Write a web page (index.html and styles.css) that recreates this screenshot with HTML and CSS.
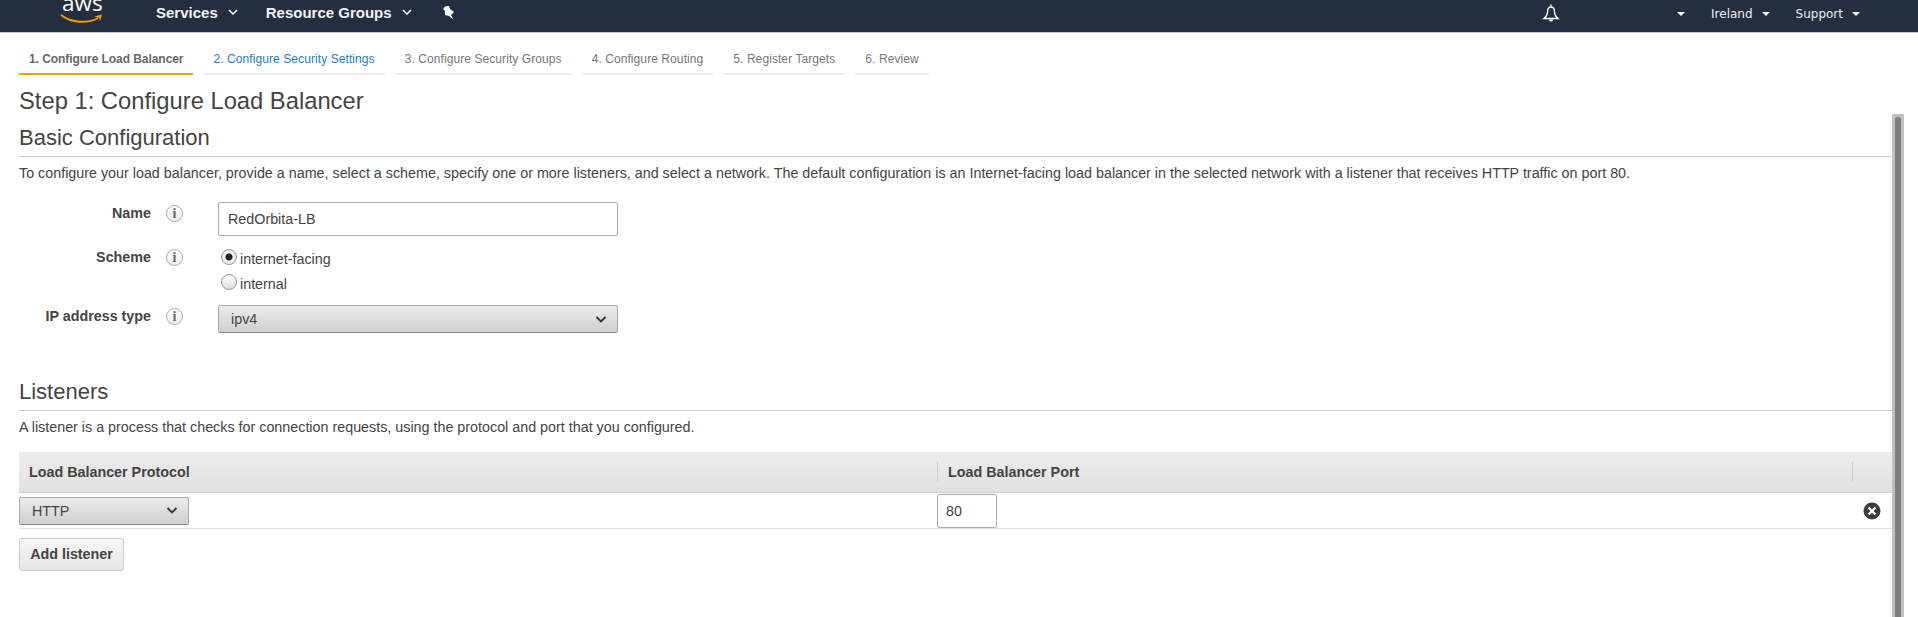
FILE: index.html
```html
<!DOCTYPE html>
<html>
    <head>
        <meta charset="utf-8">
        <title>Configure Load Balancer</title>
        <link rel="stylesheet" href="styles.css">
    </head>
    <body>
        <div class="navbar">
            <div class="logo">
                <span class="logoText">aws</span>
                <svg class="smile" width="43" height="11" viewBox="0 0 43 11">
                    <path d="M1 1 C11 9 28 10 38 4" fill="none" stroke="#f90" stroke-width="2"/>
                    <path d="M34 2.500 L42 0.500 L40 7 L39 3.500 Z" fill="#f90"/>
                </svg>
            </div>
            <div class="navItem services">Services<svg class="chevron" width="10" height="6" viewBox="0 0 10 6"><path d="M1 1 L5 5 L9 1" fill="none" stroke="#fff" stroke-width="1.6"/></svg></div>
            <div class="navItem groups">Resource Groups<svg class="chevron" width="10" height="6" viewBox="0 0 10 6"><path d="M1 1 L5 5 L9 1" fill="none" stroke="#fff" stroke-width="1.6"/></svg></div>
            <svg class="pin" width="14" height="14" viewBox="0 0 14 14">
                <path d="M4 0.500 L8 0 L9 3 L13 6 L10 9 L12.500 13.500 L8 10 L4 9 L4 5 L2 3 Z" fill="#fff"/>
            </svg>
            <div class="navRight">
                <svg class="bell" width="18" height="18" viewBox="0 0 18 18">
                    <path d="M9 0.500 V3 M9 3 C6 3 5.500 5 5.500 8 C5.500 11 4.500 12.500 2 14.500 L16 14.500 C13.500 12.500 12.500 11 12.500 8 C12.500 5 12 3 9 3 Z" fill="none" stroke="#fff" stroke-width="1.300"/>
                    <path d="M6.500 15.500 L11.500 15.500 L10 17.500 L8 17.500 Z" fill="#fff"/>
                </svg>
                <div class="smallItem account"><span class="caret"></span></div>
                <div class="smallItem region">Ireland<span class="caret"></span></div>
                <div class="smallItem support">Support<span class="caret"></span></div>
            </div>
        </div>

        <div class="tabs">
            <div class="tab active">1. Configure Load Balancer</div>
            <div class="tab next">2. Configure Security Settings</div>
            <div class="tab">3. Configure Security Groups</div>
            <div class="tab">4. Configure Routing</div>
            <div class="tab">5. Register Targets</div>
            <div class="tab">6. Review</div>
        </div>

        <h1 class="title">Step 1: Configure Load Balancer</h1>

        <div class="body">
            <div class="content">
                <h2 class="section">Basic Configuration</h2>
                <p class="description">To configure your load balancer, provide a name, select a scheme, specify one or more listeners, and select a network. The default configuration is an Internet-facing load balancer in the selected network with a listener that receives HTTP traffic on port 80.</p>

                <div class="formField nameField">
                    <span class="label">Name</span>
                    <span class="info">i</span>
                    <div class="textInput">RedOrbita-LB</div>
                </div>
                <div class="formField schemeField">
                    <span class="label">Scheme</span>
                    <span class="info">i</span>
                    <div class="radios">
                        <div class="radioRow"><span class="radio checked"></span><span class="radioText">internet-facing</span></div>
                        <div class="radioRow"><span class="radio"></span><span class="radioText">internal</span></div>
                    </div>
                </div>
                <div class="formField ipField">
                    <span class="label">IP address type</span>
                    <span class="info">i</span>
                    <div class="select wide">ipv4<svg class="selectArrow" width="12" height="7" viewBox="0 0 12 7"><path d="M1.500 1 L6 5.500 L10.500 1" fill="none" stroke="#333" stroke-width="1.800"/></svg></div>
                </div>

                <h2 class="section listeners">Listeners</h2>
                <p class="description">A listener is a process that checks for connection requests, using the protocol and port that you configured.</p>

                <div class="tableHead">
                    <div class="headCell protocol">Load Balancer Protocol</div>
                    <div class="headCell port">Load Balancer Port</div>
                    <div class="headCell remove"></div>
                </div>
                <div class="tableRow">
                    <div class="cell protocol">
                        <div class="select narrow">HTTP<svg class="selectArrow" width="12" height="7" viewBox="0 0 12 7"><path d="M1.500 1 L6 5.500 L10.500 1" fill="none" stroke="#333" stroke-width="1.800"/></svg></div>
                    </div>
                    <div class="cell port">
                        <div class="portInput">80</div>
                    </div>
                    <div class="cell remove">
                        <svg width="18" height="18" viewBox="0 0 18 18">
                            <circle cx="9" cy="9" r="8.500" fill="#3d3d3d"/>
                            <path d="M5.500 5.500 L12.500 12.500 M12.500 5.500 L5.500 12.500" stroke="#fff" stroke-width="2.200"/>
                        </svg>
                    </div>
                </div>
                <div class="addButton">Add listener</div>
            </div>
            <div class="scrollbar"><div class="thumb"></div></div>
        </div>
    </body>
</html>
```

FILE: styles.css
```css
html, body{
    height: 617px;
    overflow: hidden;
}
body{
    margin: 0;
    background: #fff;
    color: #444;
    font-family: "Liberation Sans", Arial, sans-serif;
    font-size: 14.32px;
}
.navbar{
    display: flex;
    align-items: center;
    height: 26px;
    padding-bottom: 6px;
    background: #232f3e;
    border-bottom: 1px solid #ccc;
    color: #fff;
}
.logo{
    position: relative;
    align-self: flex-start;
    width: 43px;
    height: 32px;
    margin-left: 60px;
    overflow: hidden;
}
.logoText{
    position: absolute;
    top: -12px;
    left: 2px;
    font-family: "Open Sans", sans-serif;
    font-size: 22.5px;
    line-height: 30px;
}
.smile{
    position: absolute;
    top: 14px;
    left: 0;
}
.navItem{
    display: flex;
    align-items: center;
    margin-bottom: 2px;
    font-weight: bold;
    font-size: 15px;
    color: #f2f3f3;
}
.services{
    margin-left: 53px;
}
.groups{
    margin-left: 28px;
}
.chevron{
    margin-left: 10px;
}
.pin{
    margin-left: 29px;
}
.navRight{
    display: flex;
    align-items: center;
    margin-left: auto;
    margin-right: 58px;
}
.bell{
    margin-right: 108px;
}
.smallItem{
    display: flex;
    align-items: center;
    margin-top: 2px;
    font-family: "DejaVu Sans", sans-serif;
    font-size: 12px;
    color: #eee;
}
.region{
    margin-left: 26px;
}
.support{
    margin-left: 26px;
}
.caret{
    width: 0;
    height: 0;
    margin-left: 9px;
    border-left: 4px solid transparent;
    border-right: 4px solid transparent;
    border-top: 4px solid #fff;
}
.tabs{
    display: flex;
    gap: 10px;
    margin: 19px 0 0 19px;
}
.tab{
    padding: 0 10px 7px 10px;
    border-bottom: 2px solid #eee;
    font-size: 12px;
    line-height: 14px;
    letter-spacing: 0.08px;
    color: #777;
}
.tab.active{
    border-bottom-color: #f90;
    font-weight: bold;
    letter-spacing: -0.06px;
    color: #666;
}
.tab.next{
    color: #1a7dc4;
}
.title{
    margin: 12px 0 0 19px;
    font-size: 23.75px;
    font-weight: normal;
    line-height: 28px;
    color: #444;
}
.body{
    display: flex;
    height: 503px;
    margin-top: -1px;
}
.content{
    width: 1892px;
    padding-left: 19px;
    box-sizing: border-box;
}
.scrollbar{
    width: 12px;
    padding: 3px 3px 0 3px;
    box-sizing: border-box;
    background: #c0c0c0;
}
.thumb{
    height: 100%;
    background: #7a7e80;
    border-radius: 3px 3px 0 0;
}
.section{
    margin: 11px 0 0 0;
    padding-bottom: 5px;
    border-bottom: 1px solid #ccc;
    font-size: 22px;
    font-weight: normal;
    line-height: 26px;
    color: #444;
}
.section.listeners{
    margin-top: 46px;
}
.description{
    margin: 8px 0 0 0;
    line-height: 16px;
    color: #444;
}
.formField{
    display: flex;
    align-items: flex-start;
}
.nameField{
    margin-top: 21px;
}
.schemeField{
    margin-top: 10px;
}
.ipField{
    margin-top: 15px;
}
.label{
    width: 132px;
    line-height: 22px;
    text-align: right;
    font-weight: bold;
    color: #444;
}
.info{
    width: 15px;
    height: 15px;
    margin: 3px 35px 0 15px;
    border: 1px solid #aaa;
    border-radius: 50%;
    background: linear-gradient(#fff, #eee);
    font-family: "Liberation Serif", serif;
    font-size: 14px;
    font-weight: bold;
    line-height: 15px;
    text-align: center;
    color: #666;
}
.textInput{
    width: 400px;
    height: 34px;
    padding-left: 9px;
    box-sizing: border-box;
    border: 1px solid #aaa;
    border-radius: 2px;
    line-height: 32px;
    color: #444;
}
.radios{
    display: flex;
    flex-direction: column;
    gap: 9px;
    margin-top: 3px;
}
.radioRow{
    display: flex;
    align-items: center;
    height: 16px;
    margin-left: 3px;
    color: #444;
}
.radioText{
    margin: 3px 0 0 3px;
}
.radio{
    width: 14px;
    height: 14px;
    border: 1px solid #999;
    border-radius: 50%;
    background: linear-gradient(#fff, #dedede);
}
.radio.checked{
    background: radial-gradient(circle, #222 0, #222 3px, #f4f4f4 4px, #ddd 100%);
}
.select{
    display: flex;
    align-items: center;
    justify-content: space-between;
    height: 28px;
    box-sizing: border-box;
    border: 1px solid #aaa;
    border-bottom-color: #888;
    border-radius: 2px;
    background: linear-gradient(#ebebeb, #cfcfcf);
    color: #444;
}
.select.wide{
    width: 400px;
    padding: 0 10px 0 12px;
}
.select.narrow{
    width: 170px;
    padding: 0 10px 0 12px;
}
.tableHead{
    display: flex;
    align-items: center;
    height: 41px;
    margin-top: 17px;
    box-sizing: border-box;
    border-bottom: 1px solid #ccc;
    background: linear-gradient(#ececec, #e1e1e1);
}
.headCell{
    height: 20px;
    padding-left: 10px;
    box-sizing: border-box;
    line-height: 20px;
    font-weight: bold;
    color: #444;
}
.protocol{
    width: 918px;
}
.port{
    width: 915px;
}
.remove{
    width: 40px;
}
.headCell.port, .headCell.remove{
    border-left: 1px solid #ccc;
}
.tableRow{
    display: flex;
    align-items: center;
    height: 36px;
    box-sizing: border-box;
    border-bottom: 1px solid #e1e1e1;
}
.cell.remove{
    display: flex;
    justify-content: center;
}
.portInput{
    width: 60px;
    height: 34px;
    padding-left: 8px;
    box-sizing: border-box;
    border: 1px solid #aaa;
    border-radius: 2px;
    line-height: 32px;
    color: #444;
}
.addButton{
    width: 105px;
    height: 33px;
    margin-top: 9px;
    box-sizing: border-box;
    border: 1px solid #ccc;
    border-radius: 3px;
    background: linear-gradient(#f6f6f6, #e6e6e6);
    line-height: 31px;
    text-align: center;
    font-weight: bold;
    color: #444;
}
```
